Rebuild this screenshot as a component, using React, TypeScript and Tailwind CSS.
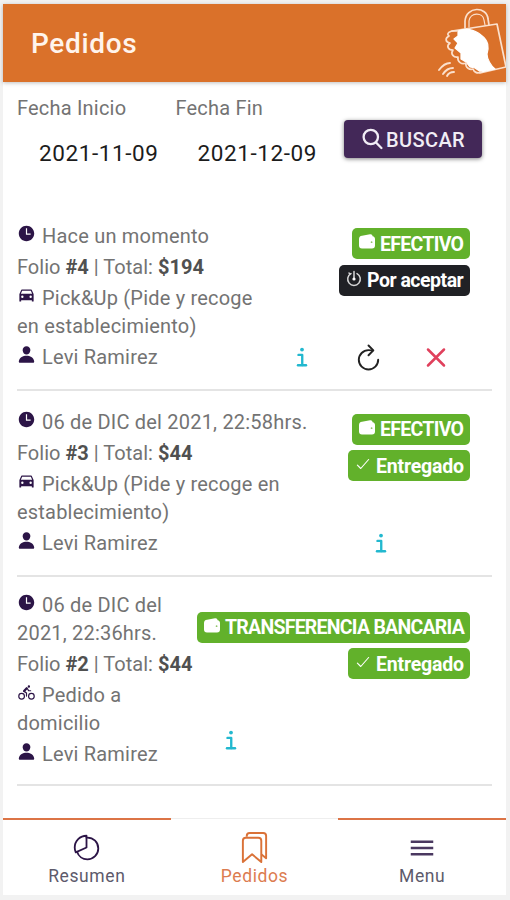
import type { ReactNode } from "react";
import {
  IoBicycle,
  IoBookmarksOutline,
  IoCarSharp,
  IoCheckmarkOutline,
  IoInformationOutline,
  IoMenuSharp,
  IoPerson,
  IoPieChartOutline,
  IoRefreshOutline,
  IoTimeSharp,
} from "react-icons/io5";

function BagLogo() {
  return (
    <svg width="69" height="77" viewBox="0 0 69 77" fill="none" stroke="#fbe0cd" strokeWidth="1.7" strokeLinecap="round" strokeLinejoin="round">
      <path d="M28 23V16C29 1 50 1 51 14L52 20" />
      <path d="M32 22V16C33 7 46 7 47 15L48 20" strokeWidth="1.2" />
      <path d="M15 26L60 19L69 62L43 68" />
      <path d="M21 26C28 23 37 24 44 30C52 36 52 42 50 49C50 54 54 61 58 64L44 67L38 63L33 62L29 57L24 54L24 48L18 43L21 38L17 34L21 31Z" fill="#fff" stroke="#fff" strokeWidth="1.2" />
      <path d="M20 26C12 25 9 29 12 31C8 33 8 37 13 38C9 41 11 45 16 45C13 49 17 53 21 52C20 57 25 60 29 58C28 63 33 65 36 64C37 67 40 69 44 67" />
      <path d="M2 65C5 61 9 58 13 58M6 69C8 66 12 63 16 63M10 71C11 69 14 67 17 67" strokeWidth="1.9" />
    </svg>
  );
}

function SearchIcon() {
  return (
    <svg width="21" height="22" viewBox="0 0 21 22" fill="none" stroke="currentColor" strokeWidth="2.3" strokeLinecap="round">
      <circle cx="8.8" cy="9" r="7.2" />
      <path d="M14 14.5L19.4 20" />
    </svg>
  );
}

function WalletIcon() {
  return (
    <svg width="18" height="17" viewBox="0 0 18 17" fill="#fff">
      <path d="M1 6C1 4 2 3 4 2.7L12 1.2C13.5 1 14.5 1.7 14.6 3.2C16.2 3.5 17 4.4 17 6V12.5C17 14.5 16 15.5 14 15.5H4C2 15.5 1 14.5 1 12.5Z" />
      <circle cx="13.6" cy="9.2" r="0.9" fill="#8fc568" />
    </svg>
  );
}

function StopwatchIcon() {
  return (
    <svg width="16" height="17" viewBox="0 0 16 17" fill="none" stroke="#d8d8d8" strokeWidth="1.5" strokeLinecap="round">
      <path d="M5 3.6A6.3 6.3 0 1 0 11 3.6M8 1.4V8M3 3L3.8 3.8" />
      <circle cx="8" cy="9" r="1.6" fill="#fff" stroke="none" />
    </svg>
  );
}

function CrossIcon() {
  return (
    <svg width="32" height="32" viewBox="0 0 32 32" fill="none" stroke="#e0405c" strokeWidth="2.5" strokeLinecap="round">
      <path d="M8 7.5L24 23.5M24 7.5L8 23.5" />
    </svg>
  );
}

function Header() {
  return (
    <header className="flex h-[78px] shrink-0 items-center justify-between bg-[#da712a] pl-7 shadow-[0_1px_4px_rgba(0,0,0,0.25)]">
      <h1 className="pt-px text-[28px] font-medium leading-none tracking-[0.65px] text-[#fff4ec]">Pedidos</h1>
      <BagLogo />
    </header>
  );
}

function DateField({ label, value }: { label: string; value: string }) {
  return (
    <div className="w-[158.5px]">
      <div className="text-[20px] leading-7 tracking-[0.2px] text-[#737373]">{label}</div>
      <div className="mt-[17px] pl-[22px] text-[22.5px] leading-7 tracking-[0.6px] text-[#1c1c1c]">{value}</div>
    </div>
  );
}

function Filters() {
  return (
    <section className="flex h-[140px] shrink-0 pl-[14px] pt-[12px]">
      <DateField label="Fecha Inicio" value="2021-11-09" />
      <DateField label="Fecha Fin" value="2021-12-09" />
      <button className="ml-[10px] mt-[26px] flex h-[38px] w-[138px] items-center justify-center rounded-[4px] bg-[#432858] pl-px text-[20px] font-medium tracking-[0.4px] text-[#f1edf5] shadow-[0_1px_4px_rgba(0,0,0,0.5)]">
        <span className="mr-[3px]">
          <SearchIcon />
        </span>
        <span className="pt-px">BUSCAR</span>
      </button>
    </section>
  );
}

function Badge({ icon, dark, className, children }: { icon: ReactNode; dark?: boolean; className?: string; children: ReactNode }) {
  return (
    <span className={`flex h-[31px] items-center whitespace-nowrap rounded-[5px] text-[19.5px] font-bold text-white ${dark ? "bg-[#202125]" : "bg-[#62b12b]"} ${className}`}>
      <span className="mb-[4px] ml-[6px] mr-[4px] flex w-[18px] justify-center text-[18px]">{icon}</span>
      <span className="pt-[2px]">{children}</span>
    </span>
  );
}

function Line({ icon, children }: { icon?: ReactNode; children: ReactNode }) {
  return (
    <p className="h-7 whitespace-nowrap">
      {icon && <span className="relative -top-[2px] mr-[6px] inline-block text-[19px] leading-none text-[#2c1547] [&>svg]:inline [&>svg]:align-[-2px]">{icon}</span>}
      {children}
    </p>
  );
}

function Folio({ id, total }: { id: string; total: string }) {
  return (
    <p className="h-7 whitespace-nowrap tracking-[0.02px]">
      Folio <b>#{id}</b> | Total: <b>${total}</b>
    </p>
  );
}

function Order({ lines, badges, actions, className }: { lines: ReactNode; badges: ReactNode; actions: ReactNode; className: string }) {
  return (
    <article className={`mx-[14px] flex justify-between border-b-2 border-[#e4e4e4] ${className}`}>
      <div className="flex w-[180px] flex-col gap-[3px] text-[20px] leading-7 tracking-[0.2px] text-[#737373] [&_b]:text-[#505050]">{lines}</div>
      <div className="flex flex-col items-end pr-[22px]">
        <div className="flex flex-col items-end gap-[5.5px]">{badges}</div>
        {actions}
      </div>
    </article>
  );
}

const delivered = (
  <Badge icon={<IoCheckmarkOutline />} className="w-[122px] tracking-[-0.2px]">
    Entregado
  </Badge>
);

const cash = (
  <Badge icon={<WalletIcon />} className="w-[118px] tracking-[-0.7px]">
    EFECTIVO
  </Badge>
);

function Tabs() {
  return (
    <nav className="grid h-[77px] shrink-0 grid-cols-3 text-center text-[17.5px] leading-5 tracking-[0.6px] text-[#5d5a6b]">
      <div className="flex flex-col items-center border-t-2 border-[#dc7446] pt-[13px]">
        <IoPieChartOutline className="size-[29px] text-[#2c1547]" />
        <span className="mt-[4px]">Resumen</span>
      </div>
      <div className="flex flex-col items-center border-t border-[#eee] pt-[13px] text-[#dc7c50]">
        <IoBookmarksOutline className="size-[31px] text-[#da7238]" />
        <span className="mt-[3px]">Pedidos</span>
      </div>
      <div className="flex flex-col items-center border-t-2 border-[#dc7446] pt-[13px]">
        <IoMenuSharp className="size-[30px] text-[#4a3860]" />
        <span className="mt-[3px]">Menu</span>
      </div>
    </nav>
  );
}

export default function App() {
  return (
    <div className="h-[900px] w-[510px] bg-[#f2f2f2] pb-[5px] pl-[3px] pr-[4px] pt-[4px] font-[Roboto,sans-serif]">
      <div className="flex h-[891px] flex-col bg-white">
        <Header />
        <Filters />
        <main className="flex-1">
          <Order
            className="h-[169px]"
            lines={
              <>
                <Line icon={<IoTimeSharp />}>Hace un momento</Line>
                <Folio id="4" total="194" />
                <div>
                  <Line icon={<IoCarSharp />}>Pick&Up (Pide y recoge</Line>
                  <Line>en establecimiento)</Line>
                </div>
                <Line icon={<IoPerson />}>Levi Ramirez</Line>
              </>
            }
            badges={
              <>
                <div className="h-[0.5px]" />
                {cash}
                <Badge dark icon={<StopwatchIcon />} className="w-[131px] tracking-[-0.5px]">
                  Por aceptar
                </Badge>
              </>
            }
            actions={
              <div className="mr-[18px] mt-[46px] flex gap-[36px]">
                <IoInformationOutline className="size-[30px] text-[#22b8cf]" />
                <IoRefreshOutline className="size-[31px] text-[#222]" />
                <CrossIcon />
              </div>
            }
          />
          <Order
            className="h-[186px] pt-[17px]"
            lines={
              <>
                <Line icon={<IoTimeSharp />}>06 de DIC del 2021, 22:58hrs.</Line>
                <Folio id="3" total="44" />
                <div>
                  <Line icon={<IoCarSharp />}>Pick&Up (Pide y recoge en</Line>
                  <Line>establecimiento)</Line>
                </div>
                <Line icon={<IoPerson />}>Levi Ramirez</Line>
              </>
            }
            badges={
              <>
                <div />
                {cash}
                {delivered}
              </>
            }
            actions={<IoInformationOutline className="mr-[74px] mt-[47px] size-[30px] text-[#22b8cf]" />}
          />
          <Order
            className="h-[209px] pt-[14px]"
            lines={
              <>
                <div>
                  <Line icon={<IoTimeSharp />}>06 de DIC del</Line>
                  <Line>2021, 22:36hrs.</Line>
                </div>
                <Folio id="2" total="44" />
                <div>
                  <Line icon={<IoBicycle />}>Pedido a</Line>
                  <Line>domicilio</Line>
                </div>
                <Line icon={<IoPerson />}>Levi Ramirez</Line>
              </>
            }
            badges={
              <>
                <div className="h-[15px]" />
                <Badge icon={<WalletIcon />} className="w-[273px] tracking-[-0.75px]">
                  TRANSFERENCIA BANCARIA
                </Badge>
                {delivered}
              </>
            }
            actions={<IoInformationOutline className="mr-[224px] mt-[46px] size-[30px] text-[#22b8cf]" />}
          />
        </main>
        <Tabs />
      </div>
    </div>
  );
}
